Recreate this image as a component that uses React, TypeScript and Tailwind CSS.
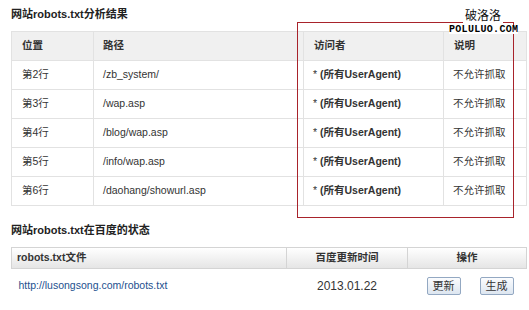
import React from "react";

const rules = [
  { line: "第2行", path: "/zb_system/" },
  { line: "第3行", path: "/wap.asp" },
  { line: "第4行", path: "/blog/wap.asp" },
  { line: "第5行", path: "/info/wap.asp" },
  { line: "第6行", path: "/daohang/showurl.asp" },
];

function Btn({ children }: { children: React.ReactNode }) {
  return (
    <button className="h-[18px] w-[34px] rounded-[2px] border border-[#93a8c2] bg-gradient-to-b from-[#fbfcfe] to-[#dde6f0] text-[11px] leading-[16px] text-[#333]">
      {children}
    </button>
  );
}

export default function App() {
  return (
    <div
      className="relative h-[310px] w-[529px] overflow-hidden bg-white pl-[11px] pr-[3px] text-[10.5px] text-[#333]"
      style={{ fontFamily: '"Liberation Sans", "Noto Sans CJK SC", sans-serif' }}
    >
      <h2 className="pt-[6px] text-[11px] leading-[16px] font-bold text-[#222]">网站robots.txt分析结果</h2>

      {/* rules table */}
      <table className="mt-[9px] w-[515px] table-fixed border-collapse">
        <colgroup>
          <col className="w-[82px]" />
          <col className="w-[210px]" />
          <col className="w-[140px]" />
          <col className="w-[83px]" />
        </colgroup>
        <thead>
          <tr className="h-[29px] bg-[#f0f0f0] text-left">
            <th className="border border-[#e2e2e2] pl-[10px] font-bold">位置</th>
            <th className="border border-[#e2e2e2] pl-[9px] font-bold">路径</th>
            <th className="border border-[#e2e2e2] pl-[10px] font-bold">访问者</th>
            <th className="border border-[#e2e2e2] pl-[10px] font-bold">说明</th>
          </tr>
        </thead>
        <tbody>
          {rules.map((r) => (
            <tr key={r.line} className="h-[29px]">
              <td className="border border-[#e2e2e2] pl-[10px]">{r.line}</td>
              <td className="border border-[#e2e2e2] pl-[9px]">{r.path}</td>
              <td className="border border-[#e2e2e2] pl-[9px]">
                * <span className="font-bold">(所有UserAgent)</span>
              </td>
              <td className="border border-[#e2e2e2] pl-[9px]">不允许抓取</td>
            </tr>
          ))}
        </tbody>
      </table>

      <h2 className="mt-[16px] text-[11px] leading-[16px] font-bold text-[#222]">网站robots.txt在百度的状态</h2>

      {/* baidu status table */}
      <table className="mt-[9px] w-[515px] table-fixed border-collapse">
        <colgroup>
          <col className="w-[275px]" />
          <col className="w-[121px]" />
          <col className="w-[119px]" />
        </colgroup>
        <thead>
          <tr className="h-[21px] bg-gradient-to-b from-white to-[#e4e4e4]">
            <th className="border border-[#d4d4d4] pl-[5px] text-left font-bold">robots.txt文件</th>
            <th className="border border-[#d4d4d4] text-center font-bold">百度更新时间</th>
            <th className="border border-[#d4d4d4] text-center font-bold">操作</th>
          </tr>
        </thead>
        <tbody>
          <tr className="h-[34px]">
            <td className="pl-[7px]">
              <a href="#" className="text-[#23508e]">http://lusongsong.com/robots.txt</a>
            </td>
            <td className="text-center text-[12px]">2013.01.22</td>
            <td>
              <div className="flex justify-center gap-[19px] pl-[6px]">
                <Btn>更新</Btn>
                <Btn>生成</Btn>
              </div>
            </td>
          </tr>
        </tbody>
      </table>

      {/* red highlight frame with watermark */}
      <div className="absolute top-[22px] left-[297px] h-[196px] w-[217px] border border-[#a8232b]" />
      <div className="absolute top-[9px] left-[463px] bg-white px-[2px] text-[12px] leading-[14px] text-[#111]">破洛洛</div>
      <div
        className="absolute top-[25px] left-[449px] bg-white text-[10px] leading-[9px] font-bold tracking-[0.3px] text-black"
        style={{ fontFamily: '"Liberation Mono", monospace' }}
      >
        POLULUO.COM
      </div>
    </div>
  );
}
